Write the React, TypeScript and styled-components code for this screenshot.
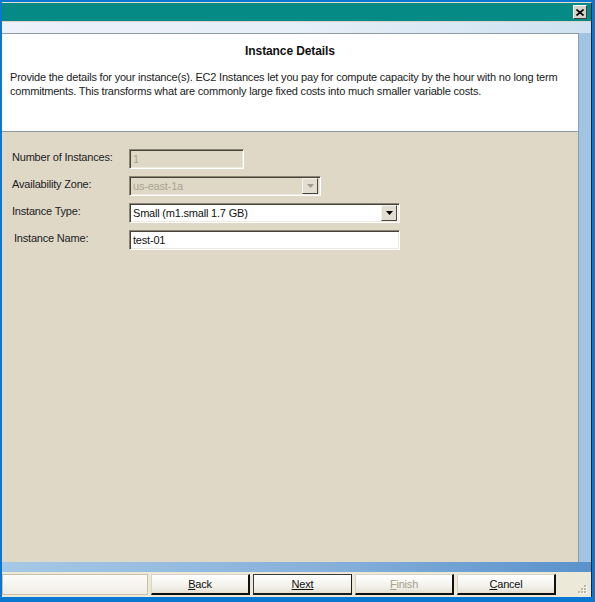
import React from 'react';
import styled, { createGlobalStyle } from 'styled-components';

const GlobalStyle = createGlobalStyle`
  html, body {
    margin: 0;
    padding: 0;
    background: #0a78d0;
  }
  body {
    font-family: 'Liberation Sans', Arial, sans-serif;
    font-size: 11px;
    letter-spacing: -0.2px;
    color: #1b1b1b;
  }
`;

const Frame = styled.div`
  width: 595px;
  height: 602px;
  box-sizing: border-box;
  padding: 2px 3px 5px 2px;
  background: #0a78d0;
`;

const Window = styled.div`
  height: 100%;
  display: flex;
  flex-direction: column;
  border-top: 1px solid #e2ddd0;
  border-right: 1px solid #1d2731;
  box-sizing: border-box;
`;

const TitleBar = styled.div`
  height: 18px;
  flex: none;
  display: flex;
  align-items: center;
  justify-content: flex-end;
  padding-right: 4px;
  background: #068a86;
  border-bottom: 1px solid #d9d5c6;
`;

const CloseButton = styled.div`
  width: 14px;
  height: 14px;
  box-sizing: border-box;
  display: grid;
  place-items: center;
  background: #d6d2c6;
  border: 1px solid;
  border-color: #ffffff #404040 #404040 #ffffff;
`;

const Client = styled.div`
  flex: 1;
  display: flex;
  flex-direction: column;
  padding: 11px 12px 10px 0;
  background-color: #a2c4e3;
  background-image: linear-gradient(90deg, #eef0fa 0%, #e6eef8 50%, #cfe1f0 100%),
    linear-gradient(90deg, #a6c8e6 0%, #86b0da 55%, #5a92cc 100%);
  background-size: 100% 11px, 100% 10px;
  background-position: top left, bottom left;
  background-repeat: no-repeat;
`;

const Panel = styled.div`
  flex: 1;
  display: flex;
  flex-direction: column;
  border-top: 1px solid #8e9ca8;
  border-right: 1px solid #8e9ca8;
`;

const Header = styled.div`
  height: 98px;
  flex: none;
  box-sizing: border-box;
  background: #ffffff;
  border-bottom: 1px solid #8e9ca8;
  padding: 10px 8px 0 8px;
  line-height: 14px;
`;

const HeaderTitle = styled.div`
  font-size: 12px;
  font-weight: bold;
  letter-spacing: -0.1px;
  text-align: center;
  color: #111;
`;

const HeaderText = styled.p`
  margin: 12px 0 0;
  color: #1b1b1b;
`;

const Content = styled.div`
  flex: 1;
  background: #dfd8c7;
  padding: 17px 10px 0;
`;

const Form = styled.div`
  display: grid;
  grid-template-columns: 117px auto;
  row-gap: 7px;
  justify-items: start;
  align-items: start;
`;

const Label = styled.div<{ $indent?: number }>`
  line-height: 14px;
  padding-top: 1px;
  padding-left: ${(p) => p.$indent ?? 0}px;
  color: #222;
`;

const Field = styled.div<{ $width: number; $disabled?: boolean }>`
  width: ${(p) => p.$width}px;
  height: 20px;
  box-sizing: border-box;
  display: flex;
  align-items: center;
  background: ${(p) => (p.$disabled ? '#dfd8c7' : '#ffffff')};
  color: ${(p) => (p.$disabled ? '#aaa392' : '#111')};
  border: 1px solid;
  border-color: #8d8573 #ffffff #ffffff #8d8573;
  box-shadow: inset 1px 1px 0 #46423a, inset -1px -1px 0 #ece9de;
  padding: 0 2px 0 3px;
`;

const FieldText = styled.span`
  flex: 1;
  white-space: nowrap;
`;

const ArrowButton = styled.div<{ $disabled?: boolean }>`
  width: 16px;
  height: 16px;
  box-sizing: border-box;
  display: grid;
  place-items: center;
  background: #e2ddd1;
  border: 1px solid;
  border-color: #f6f4ee #4a463e #4a463e #f6f4ee;
  color: ${(p) => (p.$disabled ? '#a39c8c' : '#000')};
`;

const BottomBar = styled.div`
  height: 25px;
  flex: none;
  box-sizing: border-box;
  display: flex;
  align-items: flex-start;
  gap: 3px;
  padding-top: 2px;
  background: #ece9d8;
  position: relative;
`;

const StatusBox = styled.div`
  width: 146px;
  height: 21px;
  box-sizing: border-box;
  border: 1px solid #c9c0a9;
  background: linear-gradient(#fcfcfa, #efede4);
`;

const Button = styled.div<{ $default?: boolean; $disabled?: boolean }>`
  width: 99px;
  height: 21px;
  box-sizing: border-box;
  display: grid;
  place-items: center;
  font-size: 11px;
  color: ${(p) => (p.$disabled ? '#a59d88' : '#111')};
  background: linear-gradient(#ffffff, #f3f2ec 60%, #e4e1d4);
  border: 1px solid;
  border-color: ${(p) =>
    p.$default ? '#3b3b3b #1b1b1b #1b1b1b #3b3b3b' : '#d8d4c6 #101010 #101010 #d8d4c6'};
  border-bottom-width: 2px;
  border-right-width: ${(p) => (p.$default ? 1 : 2)}px;
  u {
    text-decoration: underline;
  }
`;

const Grip = styled.svg`
  position: absolute;
  right: 3px;
  bottom: 1px;
`;

const DownArrow = () => (
  <svg width="7" height="4" viewBox="0 0 7 4">
    <path d="M0 0h7L3.5 4z" fill="currentColor" />
  </svg>
);

export default function App() {
  return (
    <Frame>
      <GlobalStyle />
      <Window>
        <TitleBar>
          <CloseButton>
            <svg width="8" height="7" viewBox="0 0 8 7">
              <path d="M0.5 0.5L7.5 6.5M7.5 0.5L0.5 6.5" stroke="#000" strokeWidth="1.6" />
            </svg>
          </CloseButton>
        </TitleBar>
        <Client>
          <Panel>
            <Header>
              <HeaderTitle>Instance Details</HeaderTitle>
              <HeaderText>
                Provide the details for your instance(s). EC2 Instances let you pay for compute
                capacity by the hour with no long term commitments. This transforms what are
                commonly large fixed costs into much smaller variable costs.
              </HeaderText>
            </Header>
            <Content>
              <Form>
                <Label>Number of Instances:</Label>
                <Field $width={115} $disabled>
                  <FieldText>1</FieldText>
                </Field>
                <Label>Availability Zone:</Label>
                <Field $width={192} $disabled>
                  <FieldText>us-east-1a</FieldText>
                  <ArrowButton $disabled>
                    <DownArrow />
                  </ArrowButton>
                </Field>
                <Label>Instance Type:</Label>
                <Field $width={271}>
                  <FieldText>Small (m1.small 1.7 GB)</FieldText>
                  <ArrowButton>
                    <DownArrow />
                  </ArrowButton>
                </Field>
                <Label $indent={2}>Instance Name:</Label>
                <Field $width={271}>
                  <FieldText>test-01</FieldText>
                </Field>
              </Form>
            </Content>
          </Panel>
        </Client>
        <BottomBar>
          <StatusBox />
          <Button>
            <span>
              <u>B</u>ack
            </span>
          </Button>
          <Button $default>
            <span>
              <u>Next</u>
            </span>
          </Button>
          <Button $disabled>
            <span>
              <u>F</u>inish
            </span>
          </Button>
          <Button>
            <span>
              <u>C</u>ancel
            </span>
          </Button>
          <Grip width="14" height="12" viewBox="0 0 14 12">
            {[
              [10, 1],
              [7, 4],
              [10, 4],
              [4, 7],
              [7, 7],
              [10, 7],
            ].map(([x, y]) => (
              <g key={`${x}-${y}`}>
                <rect x={x + 1} y={y + 1} width="2" height="2" fill="#ffffff" />
                <rect x={x} y={y} width="2" height="2" fill="#b9b4a4" />
              </g>
            ))}
          </Grip>
        </BottomBar>
      </Window>
    </Frame>
  );
}
